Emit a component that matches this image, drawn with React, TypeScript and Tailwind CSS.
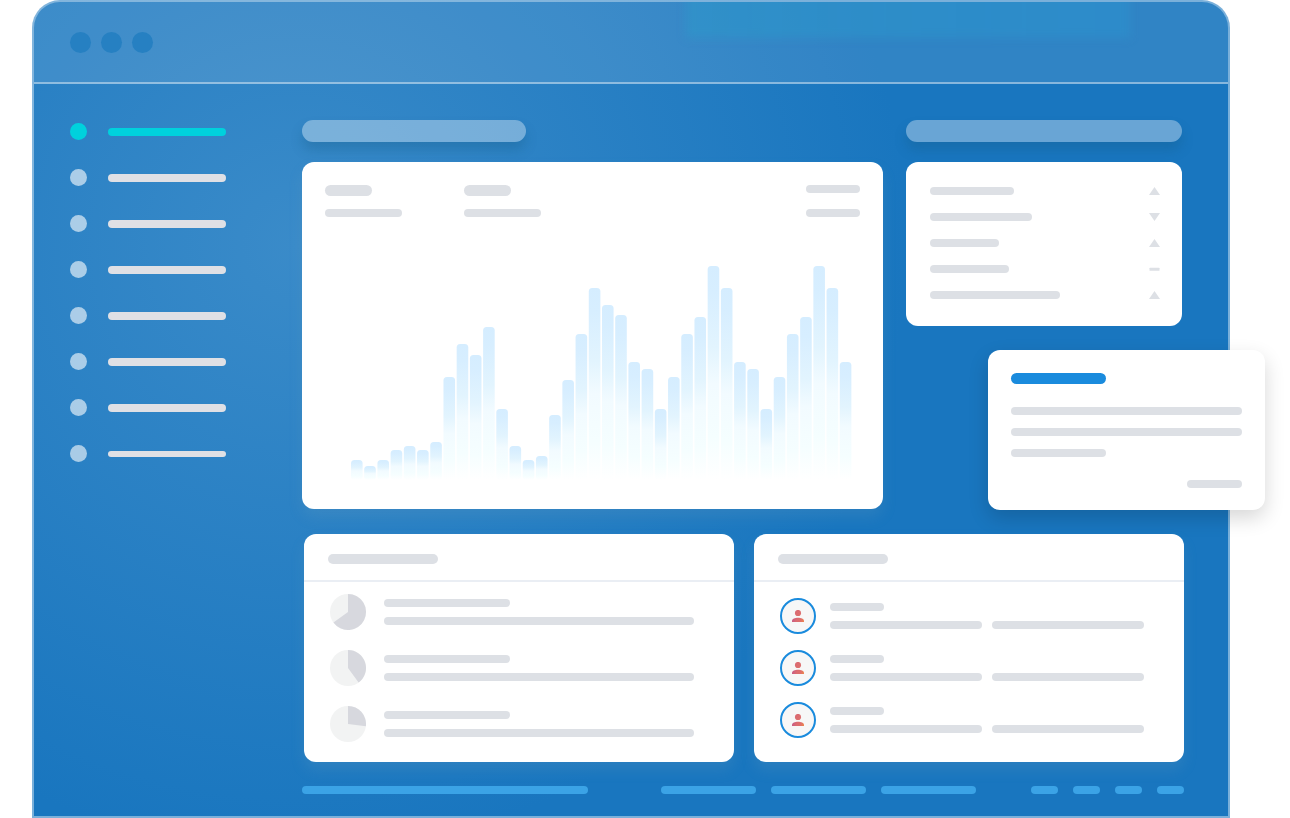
import clsx from "clsx";

const NAV_ITEMS = ["one", "two", "three", "four", "five", "six", "seven", "eight"];

const CHART_HEIGHT = 214;
const CHART_VALUES = [
  20, 14, 20, 30, 34, 30, 38, 103, 136, 125, 153, 71, 34, 20, 24, 65, 100, 146, 192, 175, 165, 118, 111, 71, 103, 146,
  163, 214, 192, 118, 111, 71, 103, 146, 163, 214, 192, 118,
];

const TRENDS = [
  { width: "w-[84px]", trend: "up" },
  { width: "w-[102px]", trend: "down" },
  { width: "w-[69px]", trend: "up" },
  { width: "w-[79px]", trend: "flat" },
  { width: "w-[130px]", trend: "up" },
];

const PIES = [0.65, 0.4, 0.27];

function Bar({ className }: { className?: string }) {
  return <div className={clsx("h-2 rounded-full bg-[#dde0e5]", className)} />;
}

function FooterBar({ className }: { className?: string }) {
  return <div className={clsx("h-2 rounded-full bg-[#3ba3e6]", className)} />;
}

function Chart() {
  return (
    <svg
      className="mt-auto mr-2 ml-[26px] h-[214px]"
      viewBox={`0 0 501 ${CHART_HEIGHT}`}
      preserveAspectRatio="none"
      aria-hidden="true"
    >
      <defs>
        <linearGradient id="bar" x1="0" y1="0" x2="0" y2="1">
          <stop offset="0" stopColor="#d5edff" />
          <stop offset="0.12" stopColor="#d7eeff" />
          <stop offset="0.38" stopColor="#e2f4fe" />
          <stop offset="0.55" stopColor="#f2fbff" />
          <stop offset="0.8" stopColor="#f5feff" />
          <stop offset="1" stopColor="#ffffff" />
        </linearGradient>
      </defs>
      {CHART_VALUES.map((value, i) => (
        <rect key={i} x={i * 13.21} y={CHART_HEIGHT - value} width={11.6} height={value} rx={3.5} fill="url(#bar)" />
      ))}
    </svg>
  );
}

function Trend({ trend }: { trend: string }) {
  return (
    <svg className="h-2 w-[11px] fill-[#dde0e5]" viewBox="0 0 11 8" aria-hidden="true">
      {trend === "up" && <path d="M5.5 0 11 8H0z" />}
      {trend === "down" && <path d="M0 0h11L5.5 8z" />}
      {trend === "flat" && <rect x="0.5" y="2.7" width="10" height="3" rx="0.5" />}
    </svg>
  );
}

function Pie({ value }: { value: number }) {
  const angle = value * Math.PI * 2;
  const x = 18 + 18 * Math.sin(angle);
  const y = 18 - 18 * Math.cos(angle);
  return (
    <svg className="size-9 shrink-0" viewBox="0 0 36 36" aria-hidden="true">
      <circle cx="18" cy="18" r="18" fill="#f2f3f3" />
      <path d={`M18 18V0A18 18 0 ${value > 0.5 ? 1 : 0} 1 ${x} ${y}z`} fill="#d7d8de" />
    </svg>
  );
}

function Avatar() {
  return (
    <div className="flex size-9 shrink-0 items-center justify-center rounded-full border-2 border-[#1a8bdd] bg-[#f7f7f7]">
      <svg className="size-3" viewBox="0 0 12 12" aria-hidden="true">
        <defs>
          <linearGradient id="person" gradientUnits="userSpaceOnUse" x1="0" y1="9" x2="12" y2="12">
            <stop offset="0" stopColor="#c65a86" />
            <stop offset="0.4" stopColor="#dc6c70" />
            <stop offset="0.7" stopColor="#de6e6c" />
            <stop offset="1" stopColor="#ee8748" />
          </linearGradient>
          <linearGradient id="head" x1="0" y1="0" x2="1" y2="1">
            <stop offset="0" stopColor="#d96873" />
            <stop offset="1" stopColor="#de716b" />
          </linearGradient>
        </defs>
        <circle cx="6" cy="3" r="3.1" fill="url(#head)" />
        <path d="M0 12v-1.2C0 8.800 3 7.700 6 7.700s6 1.100 6 3.100V12z" fill="url(#person)" />
      </svg>
    </div>
  );
}

function PanelHeader() {
  return (
    <div className="border-b-2 border-[#eaeef4] px-6 pt-5 pb-4">
      <div className="h-2.5 w-[110px] rounded-full bg-[#dde0e5]" />
    </div>
  );
}

function Sidebar() {
  return (
    <nav className="flex w-[268px] shrink-0 flex-col gap-[29px] pt-[39px] pl-9">
      {NAV_ITEMS.map((item, i) => (
        <a key={item} href={`#${item}`} aria-label={`Section ${item}`} className="flex items-center gap-[21px]">
          <span className={clsx("size-[17px] rounded-full", i === 0 ? "bg-[#00d1dd]" : "bg-white/60")} />
          <span
            className={clsx(
              "w-[118px] rounded-full",
              i === 0 ? "bg-[#00d1dd]" : "bg-[#dfe0e5]",
              i === NAV_ITEMS.length - 1 ? "h-1.5" : "h-2",
            )}
          />
        </a>
      ))}
    </nav>
  );
}

function FloatingCard() {
  return (
    <aside className="absolute top-[348px] -right-[37px] w-[277px] rounded-xl bg-white px-[23px] pt-[23px] pb-[22px] shadow-[0_8px_20px_rgba(0,0,0,0.16)]">
      <div className="h-[11px] w-[95px] rounded-full bg-[#1a8bdd]" />
      <div className="mt-[23px] flex flex-col gap-[13px]">
        <Bar />
        <Bar />
        <Bar className="w-[95px]" />
      </div>
      <Bar className="mt-[23px] ml-auto w-[55px]" />
    </aside>
  );
}

export default function App() {
  return (
    <div className="flex min-h-screen overflow-hidden bg-white pr-[60px] pl-8">
      <div className="relative flex flex-1 flex-col rounded-t-[28px] border-2 border-white/42 bg-[#1976bf] bg-[radial-gradient(ellipse_610px_610px_at_265px_245px,#3a8bc9,#1976bf)] bg-origin-border">
        <header className="relative h-[82px] shrink-0 overflow-hidden rounded-t-[26px] border-b-2 border-white/42 bg-white/10">
          <div className="absolute -top-10 right-[98px] h-[76px] w-[444px] bg-gradient-to-r from-[#2a9ccb]/45 to-[#2b93cf]/50 blur-[4px]" />
          <div className="flex h-full items-center gap-[10px] pl-9">
            <span className="size-[21px] rounded-full bg-[#2680c2]" />
            <span className="size-[21px] rounded-full bg-[#2680c2]" />
            <span className="size-[21px] rounded-full bg-[#2680c2]" />
          </div>
        </header>

        <div className="flex flex-1">
          <Sidebar />
          <main className="min-w-0 flex-1 pt-9 pr-11 pb-[22px]">
            <div className="grid grid-cols-[1fr_276px] items-start gap-x-[23px] gap-y-5 pr-0.5">
              <div className="h-[22px] w-[224px] rounded-full bg-white/35 shadow-[0_8px_12px_rgba(20,90,130,0.3)]" />
              <div className="h-[22px] rounded-full bg-white/35 shadow-[0_8px_12px_rgba(20,90,130,0.3)]" />

              <section className="flex h-[347px] flex-col rounded-xl bg-white px-[23px] pt-[23px] pb-[29px] shadow-[0_8px_14px_rgba(110,160,190,0.2)]">
                <div className="flex gap-[62px]">
                  <div className="flex w-[77px] flex-col gap-[13px]">
                    <div className="h-[11px] w-[47px] rounded-full bg-[#dde0e5]" />
                    <Bar />
                  </div>
                  <div className="flex w-[77px] flex-col gap-[13px]">
                    <div className="h-[11px] w-[47px] rounded-full bg-[#dde0e5]" />
                    <Bar />
                  </div>
                  <div className="ml-auto flex w-[54px] flex-col justify-between">
                    <Bar />
                    <Bar />
                  </div>
                </div>
                <Chart />
              </section>

              <section className="flex flex-col gap-[18px] rounded-xl bg-white pt-[25px] pr-[22px] pb-[27px] pl-6">
                {TRENDS.map((row, i) => (
                  <div key={i} className="flex items-center justify-between">
                    <Bar className={row.width} />
                    <Trend trend={row.trend} />
                  </div>
                ))}
              </section>
            </div>

            <div className="mt-[25px] grid grid-cols-2 gap-5 pl-0.5">
              <section className="rounded-xl bg-white shadow-[0_8px_14px_rgba(110,160,190,0.2)]">
                <PanelHeader />
                <div className="flex flex-col gap-5 pt-3 pr-10 pb-5 pl-[26px]">
                  {PIES.map((value) => (
                    <div key={value} className="flex items-center gap-[18px]">
                      <Pie value={value} />
                      <div className="flex flex-1 flex-col gap-2.5">
                        <Bar className="w-[126px]" />
                        <Bar />
                      </div>
                    </div>
                  ))}
                </div>
              </section>

              <section className="rounded-xl bg-white shadow-[0_8px_14px_rgba(110,160,190,0.2)]">
                <PanelHeader />
                <div className="flex flex-col gap-4 pt-4 pr-10 pb-6 pl-[26px]">
                  {[0, 1, 2].map((i) => (
                    <div key={i} className="flex items-center gap-3.5">
                      <Avatar />
                      <div className="grid flex-1 grid-cols-2 gap-2.5">
                        <Bar className="w-[54px]" />
                        <Bar className="col-start-1" />
                        <Bar />
                      </div>
                    </div>
                  ))}
                </div>
              </section>
            </div>

            <footer className="mt-6 flex">
              <FooterBar className="w-[286px]" />
              <div className="ml-auto flex gap-[15px]">
                <FooterBar className="w-[95px]" />
                <FooterBar className="w-[95px]" />
                <FooterBar className="w-[95px]" />
              </div>
              <div className="ml-[55px] flex gap-[15px]">
                <FooterBar className="w-[27px]" />
                <FooterBar className="w-[27px]" />
                <FooterBar className="w-[27px]" />
                <FooterBar className="w-[27px]" />
              </div>
            </footer>
          </main>
        </div>

        <FloatingCard />
      </div>
    </div>
  );
}
